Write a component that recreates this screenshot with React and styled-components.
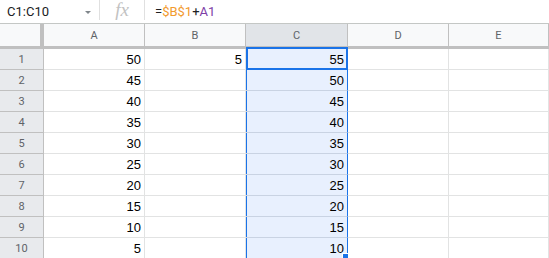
import styled, { createGlobalStyle } from 'styled-components';

const GlobalStyle = createGlobalStyle`
    html, body {
        margin: 0;
        padding: 0;
        background: #fff;
        overflow: hidden;
    }
    body {
        font-family: Roboto, 'Liberation Sans', Arial, sans-serif;
    }
`;

const COLS = ['A', 'B', 'C', 'D', 'E'];
const COL_WIDTHS = '44px 101px 101px 102px 101px 1fr';
const ROWS = [
    { a: 50, b: 5, c: 55 },
    { a: 45, c: 50 },
    { a: 40, c: 45 },
    { a: 35, c: 40 },
    { a: 30, c: 35 },
    { a: 25, c: 30 },
    { a: 20, c: 25 },
    { a: 15, c: 20 },
    { a: 10, c: 15 },
    { a: 5, c: 10 },
];

const App = () => {
    return (
        <Page>
            <GlobalStyle />
            <FormulaBar>
                <NameBox>
                    <span>C1:C10</span>
                    <Caret />
                </NameBox>
                <Divider />
                <FxLabel>fx</FxLabel>
                <Divider />
                <Formula>
                    =<Ref $color='#f29a2e'>$B$1</Ref>+<Ref $color='#7e3ea6'>A1</Ref>
                </Formula>
            </FormulaBar>
            <Grid>
                <Corner />
                {COLS.map((c) => (
                    <ColHeader key={c} $selected={c === 'C'}>
                        {c}
                    </ColHeader>
                ))}
                {ROWS.map((r, i) => (
                    <Row key={i}>
                        <RowHeader>{i + 1}</RowHeader>
                        <Cell>{r.a}</Cell>
                        <Cell>{r.b}</Cell>
                        <Cell $selected $active={i === 0} $last={i === ROWS.length - 1}>
                            {r.c}
                        </Cell>
                        <Cell />
                        <Cell />
                    </Row>
                ))}
            </Grid>
        </Page>
    );
};

const Page = styled.div`
    width: 549px;
    height: 258px;
    overflow: hidden;
    display: flex;
    flex-direction: column;
`;

const FormulaBar = styled.div`
    height: 24px;
    box-sizing: border-box;
    border-bottom: 1px solid #c4c7c5;
    display: flex;
    align-items: stretch;
`;

const NameBox = styled.div`
    width: 99px;
    box-sizing: border-box;
    padding: 0 8px 0 7px;
    display: flex;
    align-items: center;
    justify-content: space-between;
    font-size: 13px;
    color: #202124;
`;

const Caret = styled.span`
    width: 0;
    height: 0;
    border-left: 3px solid transparent;
    border-right: 3px solid transparent;
    border-top: 3px solid #80868b;
    margin-top: 1px;
`;

const Divider = styled.div`
    width: 1px;
    background: #e0e0e0;
    margin: 0 0 3px;
`;

const FxLabel = styled.div`
    width: 44px;
    display: flex;
    align-items: center;
    justify-content: center;
    font-family: 'Liberation Serif', serif;
    font-style: italic;
    font-size: 19px;
    color: #c2c2c2;
    padding-bottom: 3px;
    box-sizing: border-box;
`;

const Formula = styled.div`
    display: flex;
    align-items: center;
    padding-left: 10px;
    font-size: 13px;
    color: #202124;
`;

const Ref = styled.span`
    color: ${(p) => p.$color};
`;

const Grid = styled.div`
    display: grid;
    grid-template-columns: ${COL_WIDTHS};
    grid-template-rows: 25px;
    grid-auto-rows: 21px;
`;

const Row = styled.div`
    display: contents;
`;

const Corner = styled.div`
    background: #f8f9fa;
    border-right: 4px solid #c0c0c0;
    border-bottom: 3px solid #c0c0c0;
`;

const ColHeader = styled.div`
    background: ${(p) => (p.$selected ? '#e1e4e8' : '#f8f9fa')};
    border-right: 1px solid #c0c0c0;
    border-bottom: 3px solid #c0c0c0;
    display: flex;
    align-items: center;
    justify-content: center;
    font-size: 11px;
    color: #5f6368;
    padding-top: 1px;
`;

const RowHeader = styled.div`
    background: #e8eaed;
    border-right: 1px solid #c0c0c0;
    border-bottom: 1px solid #c0c0c0;
    display: flex;
    align-items: center;
    justify-content: center;
    font-size: 11px;
    color: #5f6368;
`;

const Cell = styled.div`
    position: relative;
    border-right: 1px solid ${(p) => (p.$selected ? '#1a73e8' : '#e2e3e3')};
    border-bottom: 1px solid ${(p) => (p.$selected ? '#c9d3e3' : '#e2e3e3')};
    background: ${(p) => (p.$selected ? '#e8f0fe' : '#fff')};
    box-shadow: ${(p) => (p.$selected ? 'inset 1px 0 #1a73e8' : 'none')};
    display: flex;
    align-items: center;
    justify-content: flex-end;
    padding-right: 3px;
    font-family: 'Liberation Sans', Arial, sans-serif;
    font-size: 13px;
    color: #000;

    ${(p) =>
        p.$active &&
        `
        &::after {
            content: '';
            position: absolute;
            top: -2px;
            left: 0;
            right: -1px;
            bottom: -1px;
            border: 2px solid #1a73e8;
        }
    `}

    ${(p) =>
        p.$last &&
        `
        &::before {
            content: '';
            position: absolute;
            right: -3px;
            bottom: -3px;
            width: 6px;
            height: 6px;
            background: #1a73e8;
            border: 1px solid #fff;
        }
    `}
`;

export default App;
